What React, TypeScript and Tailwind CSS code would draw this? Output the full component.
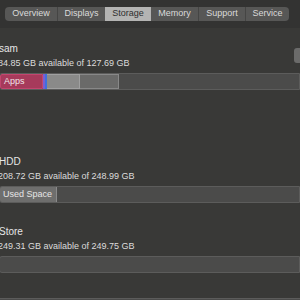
import React from 'react';

const tabs = [
  { label: 'Overview', w: 52 },
  { label: 'Displays', w: 48 },
  { label: 'Storage', w: 46 },
  { label: 'Memory', w: 47 },
  { label: 'Support', w: 47 },
  { label: 'Service', w: 44 },
];

const Disk: React.FC<{ name: string; info: string; children: React.ReactNode; mt: string }> = ({ name, info, children, mt }) => (
  <div className={`${mt} flex flex-col`}>
    <p className="-ml-[1px] h-[12px] text-[10px] leading-[12px] text-[#e6e6e6]">{name}</p>
    <p className="-ml-[2px] mt-[2px] h-[12px] whitespace-nowrap text-[9px] leading-[12px] text-[#dcdcdc]">{info}</p>
    <div className="-ml-[1px] mt-[4px] flex h-[17px] overflow-hidden rounded-l-[3px] border border-[#5c5c5b] bg-[#4b4b4a]">
      {children}
    </div>
  </div>
);

export default function App() {
  return (
    <div
      className="relative h-[300px] w-[300px] overflow-hidden bg-[#393937]"
      style={{ fontFamily: '"Liberation Sans", Arial, sans-serif' }}
    >
      <div className="flex h-[28px] items-center bg-[#333332] pl-[5px]">
        <div className="flex h-[14px] overflow-hidden rounded-[4px] bg-[#575756]">
          {tabs.map((t, i) => (
            <div
              key={t.label}
              style={{ width: t.w }}
              className={`flex items-center justify-center whitespace-nowrap text-[9px] ${
                t.label === 'Storage'
                  ? 'bg-[#b4b4b3] text-[#2e2e2e]'
                  : 'text-[#dadada]'
              } ${i > 0 && t.label !== 'Storage' && tabs[i - 1].label !== 'Storage' ? 'border-l border-[#454544]' : ''}`}
            >
              {t.label}
            </div>
          ))}
        </div>
      </div>

      <div className="absolute right-[-8px] top-[48px] h-[15px] w-[14px] rounded-[3px] bg-[#6b6b6a]" />

      <Disk name="sam" info="84.85 GB available of 127.69 GB" mt="mt-[15px]">
        <div className="flex w-[43px] items-center whitespace-nowrap rounded-l-[2px] border border-[#c2456e] bg-[#a63a5b] pl-[3px] text-[9px] text-[#f0e6ea]">
          Apps
        </div>
        <div className="w-[2px] bg-[#7a5fd0]" />
        <div className="w-[2px] bg-[#3f6fe0]" />
        <div className="w-[33px] border-y border-r border-[#a0a0a0] bg-[#8a8a89]" />
        <div className="w-[39px] border-y border-r border-[#888888] bg-[#6a6a69]" />
      </Disk>

      <Disk name="HDD" info="208.72 GB available of 248.99 GB" mt="mt-[66px]">
        <div className="flex w-[57px] items-center whitespace-nowrap border-r border-[#8a8a8a] bg-[#6e6e6d] pl-[3px] text-[9px] text-[#e6e6e6]">
          Used Space
        </div>
      </Disk>

      <Disk name="Store" info="249.31 GB available of 249.75 GB" mt="mt-[23px]">
        <div />
      </Disk>

      <div className="mt-[25px] h-[4px] border-t border-[#5c5c5b] bg-[#4b4b4a]" />
    </div>
  );
}
